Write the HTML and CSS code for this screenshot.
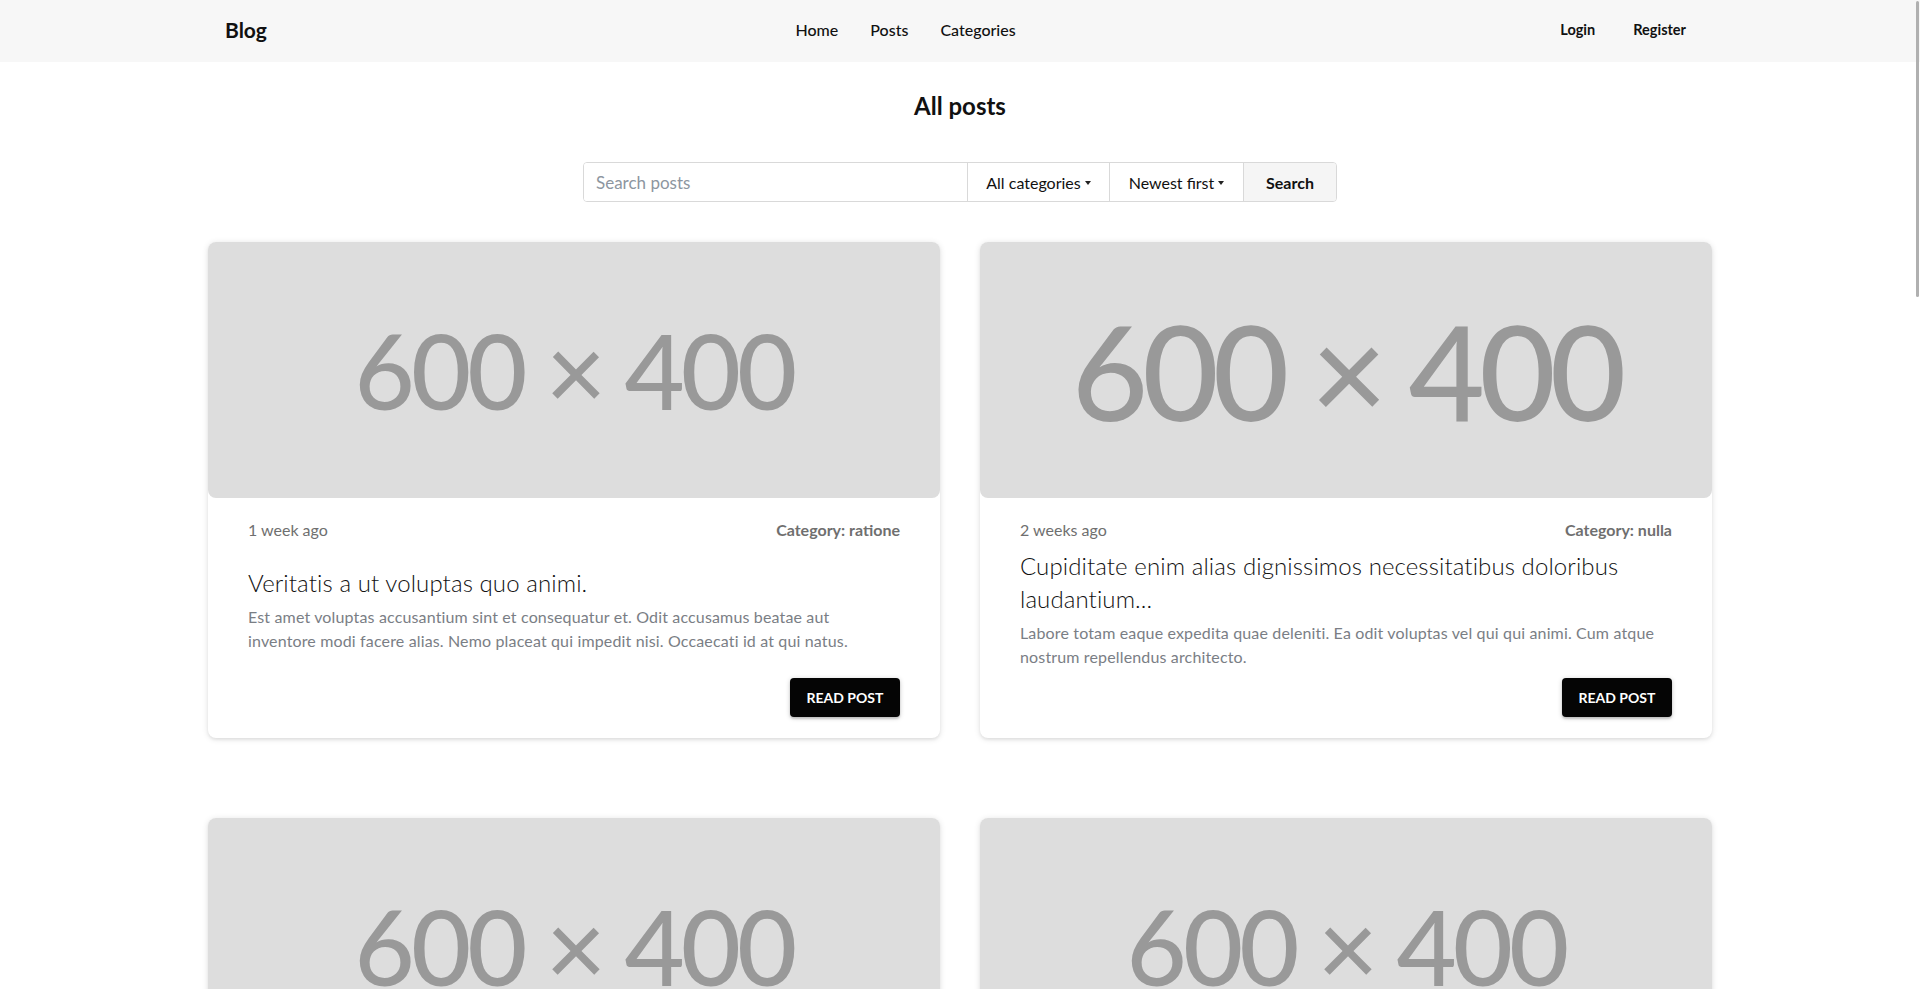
FILE: index.html
```html
<!DOCTYPE html>
<html lang="en">
<head>
<meta charset="utf-8">
<title>Blog</title>
<link rel="stylesheet" href="styles.css">
</head>
<body>
<header class="navbar">
  <div class="navbar-inner">
    <a class="brand" href="#">Blog</a>
    <nav class="nav-links">
      <a href="#">Home</a>
      <a href="#">Posts</a>
      <a href="#">Categories</a>
    </nav>
    <div class="auth">
      <a class="auth-btn" href="#">Login</a>
      <a class="auth-btn" href="#">Register</a>
    </div>
  </div>
</header>

<main class="page">
  <h1 class="page-title">All posts</h1>

  <form class="search-bar">
    <input class="search-input" type="text" placeholder="Search posts">
    <button type="button" class="dropdown dd-cat">All categories <span class="caret"></span></button>
    <button type="button" class="dropdown dd-sort">Newest first <span class="caret"></span></button>
    <button type="button" class="search-btn">Search</button>
  </form>

  <section class="grid">
    <article class="card">
      <div class="thumb"><span class="ph ph-sm">600 × 400</span></div>
      <div class="card-body">
        <div class="meta"><span class="ago">1 week ago</span><span class="cat">Category: ratione</span></div>
        <div class="middle">
          <h2 class="post-title">Veritatis a ut voluptas quo animi.</h2>
          <p class="excerpt">Est amet voluptas accusantium sint et consequatur et. Odit accusamus beatae aut inventore modi facere alias. Nemo placeat qui impedit nisi. Occaecati id at qui natus.</p>
        </div>
        <div class="actions"><a class="read-btn" href="#">Read post</a></div>
      </div>
    </article>

    <article class="card">
      <div class="thumb"><span class="ph ph-lg">600 × 400</span></div>
      <div class="card-body">
        <div class="meta"><span class="ago">2 weeks ago</span><span class="cat">Category: nulla</span></div>
        <div class="middle">
          <h2 class="post-title">Cupiditate enim alias dignissimos necessitatibus doloribus laudantium...</h2>
          <p class="excerpt">Labore totam eaque expedita quae deleniti. Ea odit voluptas vel qui qui animi. Cum atque nostrum repellendus architecto.</p>
        </div>
        <div class="actions"><a class="read-btn" href="#">Read post</a></div>
      </div>
    </article>

    <article class="card">
      <div class="thumb"><span class="ph ph-sm">600 × 400</span></div>
      <div class="card-body">
        <div class="meta"><span class="ago">3 weeks ago</span><span class="cat">Category: dolor</span></div>
        <div class="middle">
          <h2 class="post-title">Quia sed et eveniet molestiae.</h2>
          <p class="excerpt">Voluptatem rerum sunt aut quia. Dolorem quis et voluptas qui. Sit est ipsa dolores et rerum.</p>
        </div>
        <div class="actions"><a class="read-btn" href="#">Read post</a></div>
      </div>
    </article>

    <article class="card">
      <div class="thumb"><span class="ph ph-sm">600 × 400</span></div>
      <div class="card-body">
        <div class="meta"><span class="ago">1 month ago</span><span class="cat">Category: magni</span></div>
        <div class="middle">
          <h2 class="post-title">Aut omnis in ut repudiandae.</h2>
          <p class="excerpt">Nihil aut esse quo voluptatem. Est aliquid illum quaerat consequatur. Rerum non qui explicabo.</p>
        </div>
        <div class="actions"><a class="read-btn" href="#">Read post</a></div>
      </div>
    </article>
  </section>
</main>

<div class="scroll-thumb" aria-hidden="true"></div>
</body>
</html>
```

FILE: styles.css
```css
* { box-sizing: border-box; }

html, body {
  margin: 0;
  padding: 0;
  background: #ffffff;
}

body {
  font-family: "Lato", "Open Sans", "Liberation Sans", sans-serif;
  color: #111111;
  -webkit-font-smoothing: antialiased;
}

a { color: inherit; text-decoration: none; }

/* ---------- Navbar ---------- */
.navbar {
  background: #f7f7f7;
  height: 62px;
}

.navbar-inner {
  width: 1504px;
  height: 100%;
  margin: 0 auto;
  padding: 0 10px 4px 17px;
  display: flex;
  align-items: center;
  justify-content: space-between;
}

.brand {
  font-size: 21px;
  font-weight: 700;
  color: #111;
}

.nav-links {
  display: flex;
}

.nav-links a {
  font-size: 16px;
  font-weight: 500;
  padding: 0 16px;
  color: #111;
}

.auth {
  display: flex;
  gap: 6px;
}

.auth-btn {
  font-size: 14.5px;
  font-weight: 700;
  padding: 6px 16px;
  color: #111;
}

/* ---------- Page ---------- */
.page {
  width: 1504px;
  margin: 0 auto;
  padding-top: 28px;
}

.page-title {
  margin: 0;
  text-align: center;
  font-size: 24px;
  line-height: 32px;
  font-weight: 700;
  color: #111;
}

/* ---------- Search bar ---------- */
.search-bar {
  display: flex;
  width: 754px;
  height: 40px;
  margin: 40px auto 40px;
  border: 1px solid #d9d9d9;
  border-radius: 4px;
  overflow: hidden;
}

.search-input {
  width: 383px;
  border: 0;
  outline: none;
  padding: 0 12px;
  font-family: inherit;
  font-size: 17px;
  color: #111;
  background: #fff;
}

.search-input::placeholder { color: #8d96a0; }

.dropdown, .search-btn {
  border: 0;
  border-left: 1px solid #d9d9d9;
  background: #fff;
  font-family: inherit;
  font-size: 16px;
  color: #111;
  display: flex;
  align-items: center;
  justify-content: center;
  gap: 4px;
  padding: 0;
  cursor: pointer;
}

.dd-cat { width: 142px; }
.dd-sort { width: 134px; }

.caret {
  width: 0;
  height: 0;
  border-left: 3.5px solid transparent;
  border-right: 3.5px solid transparent;
  border-top: 4px solid #222;
  margin-top: 2px;
}

.search-btn {
  flex: 1;
  background: #f5f5f5;
  font-weight: 700;
}

/* ---------- Grid of cards ---------- */
.grid {
  display: grid;
  grid-template-columns: 1fr 1fr;
  column-gap: 40px;
  row-gap: 80px;
  padding-bottom: 80px;
}

.card {
  background: #fff;
  border-radius: 8px;
  box-shadow: 0 1px 6px rgba(0, 0, 0, 0.12), 0 2px 3px rgba(0, 0, 0, 0.05);
  display: flex;
  flex-direction: column;
}

.thumb {
  height: 256px;
  background: #dddddd;
  border-radius: 8px;
  display: flex;
  align-items: center;
  justify-content: center;
  overflow: hidden;
}

.ph {
  color: #999999;
  font-weight: 500;
  line-height: 1;
  white-space: nowrap;
}

.ph-sm { font-size: 104px; letter-spacing: -4px; }
.ph-lg { font-size: 132px; letter-spacing: -6px; }

.card-body {
  height: 240px;
  padding: 22px 40px 21px;
  display: flex;
  flex-direction: column;
}

.meta {
  display: flex;
  justify-content: space-between;
  font-size: 16px;
  line-height: 20px;
  color: #6f6f6f;
}

.cat { font-weight: 700; }

.middle {
  flex: 1;
  display: flex;
  flex-direction: column;
  justify-content: center;
}

.post-title {
  margin: 0 0 6px;
  font-size: 24px;
  line-height: 33px;
  font-weight: 300;
  letter-spacing: 0.1px;
  color: #111;
}

.excerpt {
  margin: 0;
  font-size: 16px;
  line-height: 24px;
  font-weight: 400;
  letter-spacing: 0.15px;
  color: #7a7e85;
}

.actions {
  display: flex;
  justify-content: flex-end;
}

.read-btn {
  display: inline-flex;
  align-items: center;
  justify-content: center;
  width: 110px;
  height: 39px;
  background: #050505;
  color: #fff;
  border-radius: 4px;
  font-size: 14px;
  font-weight: 700;
  text-transform: uppercase;
  box-shadow: 0 1px 5px rgba(0, 0, 0, 0.2), 0 2px 2px rgba(0, 0, 0, 0.14);
}

/* overlay scrollbar thumb, as the browser draws it over the page */
.scroll-thumb {
  position: fixed;
  top: 1px;
  right: 1px;
  width: 3px;
  height: 296px;
  background: #b0b0b0;
  border-radius: 2px;
}
```
